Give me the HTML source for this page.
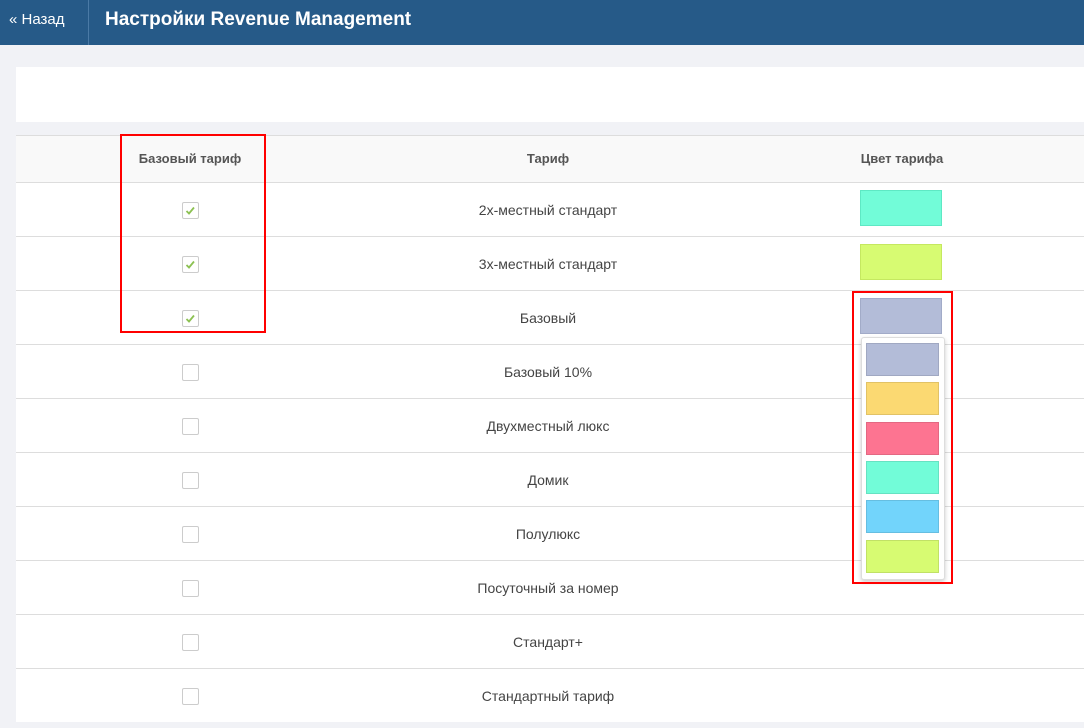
<!DOCTYPE html>
<html><head><meta charset="utf-8"><style>
body{margin:0;width:1084px;height:728px;background:#f1f2f6;font-family:"Liberation Sans",Arial,sans-serif;position:relative;overflow:hidden}
.hdr{position:absolute;left:0;top:0;width:1084px;height:45px;background:#265a88}
.back{position:absolute;left:9px;top:11px;color:#fff;font-size:15px}
.sep{position:absolute;left:88px;top:0;width:1px;height:45px;background:#4a7aa6}
.title{position:absolute;left:105px;top:9px;color:#fff;font-size:19px;font-weight:bold}
.panel{position:absolute;left:16px;top:67px;width:1068px;height:55px;background:#fff}
.tbl{position:absolute;left:16px;top:135px;width:1068px;height:586px;background:#fff;border-top:1px solid #ddd}
.th{position:absolute;left:0;top:0;width:1068px;height:46px;background:#f9f9f9;border-bottom:1px solid #ddd;font-size:13px;font-weight:bold;color:#555}
.row{position:absolute;left:0;width:1068px;height:53px;border-bottom:1px solid #ddd;font-size:14px;color:#444}
.c{position:absolute;transform:translateX(-50%);white-space:nowrap}
.cb{position:absolute;left:166px;width:15px;height:15px;border:1px solid #ccc;border-radius:2px;background:#fff}
.sw{position:absolute;left:844px;width:82px;height:36px;border:1px solid #ccc;box-sizing:border-box}
.red{position:absolute;border:2px solid #f00;box-sizing:border-box}
.dd{position:absolute;left:861px;top:337px;width:82px;height:241px;background:#fff;border:1px solid #ddd;border-radius:3px;box-shadow:0 2px 4px rgba(0,0,0,.2)}
.o{position:absolute;left:4px;width:73px;height:33px;box-sizing:border-box;border:1px solid rgba(0,0,0,.1)}
</style></head><body>
<div class="hdr"><div class="back">« Назад</div><div class="sep"></div><div class="title">Настройки Revenue Management</div></div>
<div class="panel"></div>
<div class="tbl">
<div class="th"><span class="c" style="left:174px;top:15px">Базовый тариф</span><span class="c" style="left:532px;top:15px">Тариф</span><span class="c" style="left:886px;top:15px">Цвет тарифа</span></div>
<div class="row" style="top:47px"><div class="cb" style="top:19px"><svg width="15" height="15"><path d="M3.5 8l2.5 2.5 5-6" stroke="#8cc152" stroke-width="1.8" fill="none"/></svg></div><span class="c" style="left:532px;top:19px">2х-местный стандарт</span><div class="sw" style="top:7px;background:#72fcd8;border-color:#5ee8c4"></div></div>
<div class="row" style="top:101px"><div class="cb" style="top:19px"><svg width="15" height="15"><path d="M3.5 8l2.5 2.5 5-6" stroke="#8cc152" stroke-width="1.8" fill="none"/></svg></div><span class="c" style="left:532px;top:19px">3х-местный стандарт</span><div class="sw" style="top:7px;background:#d7fb72;border-color:#c5e860"></div></div>
<div class="row" style="top:155px"><div class="cb" style="top:19px"><svg width="15" height="15"><path d="M3.5 8l2.5 2.5 5-6" stroke="#8cc152" stroke-width="1.8" fill="none"/></svg></div><span class="c" style="left:532px;top:19px">Базовый</span><div class="sw" style="top:7px;background:#b3bcd8;border-color:#a2abc8"></div></div>
<div class="row" style="top:209px"><div class="cb" style="top:19px"></div><span class="c" style="left:532px;top:19px">Базовый 10%</span></div>
<div class="row" style="top:263px"><div class="cb" style="top:19px"></div><span class="c" style="left:532px;top:19px">Двухместный люкс</span></div>
<div class="row" style="top:317px"><div class="cb" style="top:19px"></div><span class="c" style="left:532px;top:19px">Домик</span></div>
<div class="row" style="top:371px"><div class="cb" style="top:19px"></div><span class="c" style="left:532px;top:19px">Полулюкс</span></div>
<div class="row" style="top:425px"><div class="cb" style="top:19px"></div><span class="c" style="left:532px;top:19px">Посуточный за номер</span></div>
<div class="row" style="top:479px"><div class="cb" style="top:19px"></div><span class="c" style="left:532px;top:19px">Стандарт+</span></div>
<div class="row" style="top:533px;border-bottom:none"><div class="cb" style="top:19px"></div><span class="c" style="left:532px;top:19px">Стандартный тариф</span></div>
</div>
<div class="dd">
<div class="o" style="top:5px;background:#b3bcd8"></div>
<div class="o" style="top:44px;background:#fbd972"></div>
<div class="o" style="top:84px;background:#fd7491"></div>
<div class="o" style="top:123px;background:#72fcd8"></div>
<div class="o" style="top:162px;background:#72d4fb"></div>
<div class="o" style="top:202px;background:#d7fb72"></div>
</div>
<div class="red" style="left:120px;top:134px;width:146px;height:199px"></div>
<div class="red" style="left:852px;top:291px;width:101px;height:293px"></div>
</body></html>
